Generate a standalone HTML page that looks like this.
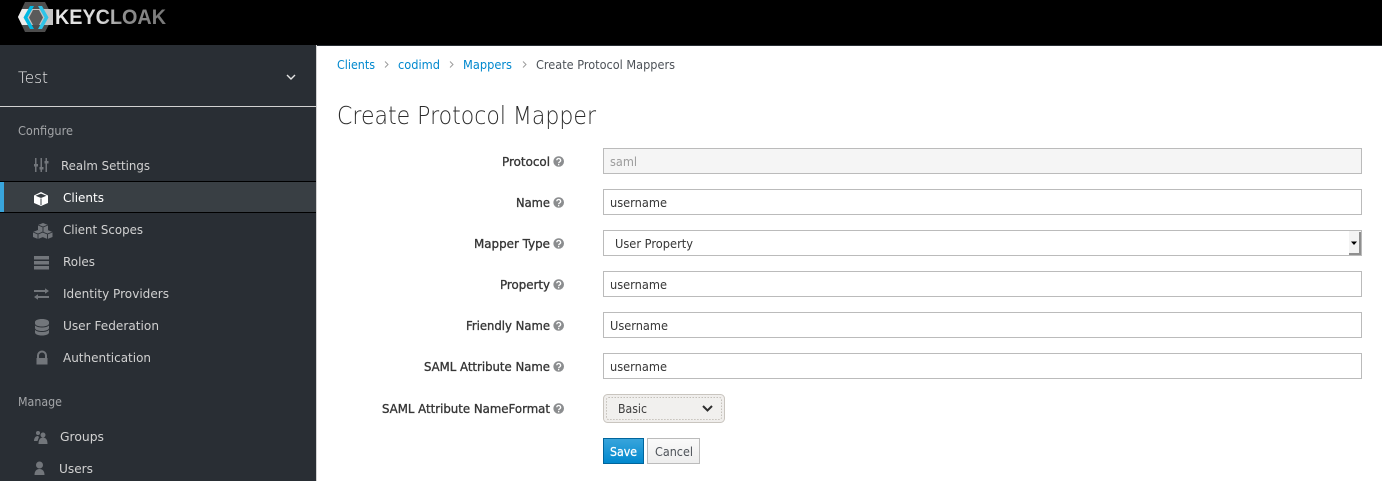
<!DOCTYPE html>
<html><head><meta charset="utf-8"><title>Create Protocol Mapper</title>
<style>
html,body{margin:0;padding:0;background:#fff;width:1382px;height:481px;overflow:hidden}
svg{display:block;position:absolute;left:0;top:0}
text{font-family:"DejaVu Sans","Liberation Sans",sans-serif;font-size:12.5px}
.n{fill:#d1d1d1}
.h{fill:#a3a5a8}
.l{fill:#363636;stroke:#363636;stroke-width:.35px;font-size:12.5px}
.v{fill:#363636}
.a{fill:#0088ce}
.ip{fill:#fff;stroke:#bbb;stroke-width:1}
.ic{fill:#72767b}
</style></head><body>
<svg width="1382" height="481" viewBox="0 0 1382 481" xmlns="http://www.w3.org/2000/svg">
<defs>
<linearGradient id="kc" x1="0" x2="1" y1="0" y2="0"><stop offset="0" stop-color="#e8e8e8"/><stop offset=".42" stop-color="#d8d8d8"/><stop offset=".6" stop-color="#909090"/><stop offset="1" stop-color="#777"/></linearGradient>
<linearGradient id="sv" x1="0" x2="0" y1="0" y2="1"><stop offset="0" stop-color="#39a5dc"/><stop offset="1" stop-color="#0088ce"/></linearGradient>
<linearGradient id="cn" x1="0" x2="0" y1="0" y2="1"><stop offset="0" stop-color="#fafafa"/><stop offset="1" stop-color="#ededed"/></linearGradient>
</defs>
<!-- top bar -->
<rect x="0" y="0" width="1382" height="45" fill="#000"/>
<rect x="317" y="45" width="1065" height="1" fill="#292e34"/>
<!-- logo -->
<path d="M25 2H45L53 17L45 32H25L18 17Z" fill="#4d4d4d"/>
<path d="M22 9H53V25H22L18 17Z" fill="#c4c4c4"/>
<path d="M18 17L22 9H30L26 17L30 25H22Z" fill="#ececec"/>
<path d="M29 17.500L33 10H39L43 17.500L39 25H33Z" fill="#5a5a5a"/>
<path d="M30 6H34L27.500 17.500L34 29H30L23.500 17.500Z" fill="#00b8e3"/>
<path d="M38 6H42L48.500 17.500L42 29H38L44.500 17.500Z" fill="#2fc4e8"/>
<text x="55" y="24" textLength="111" lengthAdjust="spacingAndGlyphs" style="font-family:'Liberation Sans',sans-serif;font-weight:bold;font-size:21px" fill="url(#kc)">KEYCLOAK</text>
<!-- sidebar -->
<rect x="0" y="45" width="316" height="436" fill="#292e34"/>
<rect x="316" y="45" width="1" height="436" fill="#d1d1d1"/>
<rect x="0" y="106" width="316" height="1" fill="#d1d1d1"/>
<text x="18" y="83" textLength="30" lengthAdjust="spacingAndGlyphs" style="font-size:16px;font-weight:200" fill="#f0f0f0">Test</text>
<path d="M287 75L291 79L295 75" fill="none" stroke="#e5e5e5" stroke-width="1.400"/>
<text class="h" x="18" y="135" textLength="55" lengthAdjust="spacingAndGlyphs">Configure</text>
<text class="n" x="61" y="170" textLength="89" lengthAdjust="spacingAndGlyphs">Realm Settings</text>
<rect x="0" y="181" width="316" height="32" fill="#393f44"/>
<rect x="0" y="181" width="316" height="1" fill="#000"/>
<rect x="0" y="212" width="316" height="1" fill="#000"/>
<rect x="0" y="182" width="4" height="30" fill="#39a5dc"/>
<text x="63" y="202" textLength="41" lengthAdjust="spacingAndGlyphs" fill="#fff">Clients</text>
<text class="n" x="63" y="234" textLength="80" lengthAdjust="spacingAndGlyphs">Client Scopes</text>
<text class="n" x="63" y="266" textLength="32" lengthAdjust="spacingAndGlyphs">Roles</text>
<text class="n" x="63" y="298" textLength="106" lengthAdjust="spacingAndGlyphs">Identity Providers</text>
<text class="n" x="63" y="330" textLength="96" lengthAdjust="spacingAndGlyphs">User Federation</text>
<text class="n" x="63" y="362" textLength="88" lengthAdjust="spacingAndGlyphs">Authentication</text>
<text class="h" x="18" y="406" textLength="44" lengthAdjust="spacingAndGlyphs">Manage</text>
<text class="n" x="60" y="441" textLength="44" lengthAdjust="spacingAndGlyphs">Groups</text>
<text class="n" x="59" y="473" textLength="34" lengthAdjust="spacingAndGlyphs">Users</text>
<!-- sidebar icons -->
<g class="ic">
<path d="M35 158h1.500v14H35zM40.500 158h1.500v14h-1.500zM45.500 158h1.500v14h-1.500z"/>
<path d="M34 164h4v2.500h-4zM39.500 167h4v2.500h-4zM44.500 161h4v2.500h-4z"/>
</g>
<path d="M41 192L48 195.500V203L41 206L34 203V195.500Z" fill="#fff"/>
<path d="M35.500 195.800L41 193.600L46.500 195.800L41 198Z" fill="#393f44"/>
<path d="M41 198.500V205" stroke="#393f44" stroke-width="1" fill="none"/>
<g class="ic">
<path d="M43 223l5 2v5l-5 2-5-2v-5z"/>
<path d="M38 230l5 2v5l-5 2-5-2v-5z"/>
<path d="M47.500 230l5 2v5l-5 2-5-2v-5z"/>
<path d="M34 256h15v3.500H34zM34 261h15v3.500H34zM34 266h15v3.500H34z"/>
<path d="M34 290h11v-1.800l4 2.800-4 2.800V292H34zM49 296H38v-1.800l-4 2.800 4 2.800V298h11z"/>
<path d="M35 322c0-1.700 3-3 7-3s7 1.300 7 3v1.500c0 1.700-3 3-7 3s-7-1.300-7-3zM35 325.500c2 1.500 4.500 2 7 2s5-.5 7-2v2.500c0 1.700-3 3-7 3s-7-1.300-7-3zM35 330c2 1.500 4.500 2 7 2s5-.5 7-2v2.500c0 1.700-3 3-7 3s-7-1.300-7-3z"/>
<path d="M37 358v-2.500a5 5 0 0 1 10 0V358h-2v-2.500a3 3 0 0 0-6 0V358z"/>
<path d="M36.500 358h11v6.500h-11z"/>
<circle cx="38" cy="433" r="2"/>
<path d="M34 441c0-3 1.500-5 4-5l1 1-1.500 4z"/>
<circle cx="43" cy="435" r="2.500"/>
<path d="M38.500 444c0-4 1.500-6.500 4.500-6.500s4.500 2.500 4.500 6.500z"/>
<circle cx="39.500" cy="465" r="3.500"/>
<path d="M34.500 475c0-4 2-6 5-6s5 2 5 6z"/>
</g>
<g fill="none" stroke="#292e34" stroke-width=".9">
<path d="M38 225l5 2 5-2M43 227v5M33 232l5 2 5-2M38 234v5M42.500 232l5 2 5-2M47.500 234v5"/>
</g>
<!-- breadcrumb -->
<text class="a" x="337" y="69" textLength="38" lengthAdjust="spacingAndGlyphs">Clients</text>
<path d="M385 61.500l3 3-3 3" fill="none" stroke="#9c9c9c"/>
<text class="a" x="398" y="69" textLength="42" lengthAdjust="spacingAndGlyphs">codimd</text>
<path d="M450 61.500l3 3-3 3" fill="none" stroke="#9c9c9c"/>
<text class="a" x="463" y="69" textLength="49" lengthAdjust="spacingAndGlyphs">Mappers</text>
<path d="M523 61.500l3 3-3 3" fill="none" stroke="#9c9c9c"/>
<text x="536" y="69" textLength="139" lengthAdjust="spacingAndGlyphs" fill="#4d5258">Create Protocol Mappers</text>
<text x="337" y="124" textLength="259" lengthAdjust="spacingAndGlyphs" style="font-family:'DejaVu Sans','Liberation Sans',sans-serif;font-weight:200;font-size:25px" fill="#2b2b2b">Create Protocol Mapper</text>
<!-- labels -->
<text class="l" x="502" y="166" textLength="48" lengthAdjust="spacingAndGlyphs">Protocol</text>
<text class="l" x="516" y="207" textLength="34" lengthAdjust="spacingAndGlyphs">Name</text>
<text class="l" x="474" y="248" textLength="76" lengthAdjust="spacingAndGlyphs">Mapper Type</text>
<text class="l" x="500" y="289" textLength="50" lengthAdjust="spacingAndGlyphs">Property</text>
<text class="l" x="466" y="330" textLength="84" lengthAdjust="spacingAndGlyphs">Friendly Name</text>
<text class="l" x="424" y="371" textLength="126" lengthAdjust="spacingAndGlyphs">SAML Attribute Name</text>
<text class="l" x="382" y="413" textLength="168" lengthAdjust="spacingAndGlyphs">SAML Attribute NameFormat</text>
<!-- help icons -->
<g fill="#8b8d8f">
<circle cx="558.700" cy="161.500" r="5.300"/><circle cx="558.700" cy="202.500" r="5.300"/><circle cx="558.700" cy="243.500" r="5.300"/><circle cx="558.700" cy="284.500" r="5.300"/><circle cx="558.700" cy="325.500" r="5.300"/><circle cx="558.700" cy="366.500" r="5.300"/><circle cx="558.700" cy="408.500" r="5.300"/>
</g>
<g fill="none" stroke="#fff" stroke-width="1.300">
<path d="M556.800 160.300a1.900 1.800 0 1 1 2.800 1.600c-.6.300-.9.600-.9 1.300"/>
<path d="M556.800 201.300a1.900 1.800 0 1 1 2.800 1.600c-.6.300-.9.600-.9 1.300"/>
<path d="M556.800 242.300a1.900 1.800 0 1 1 2.800 1.600c-.6.300-.9.600-.9 1.300"/>
<path d="M556.800 283.300a1.900 1.800 0 1 1 2.800 1.600c-.6.300-.9.600-.9 1.300"/>
<path d="M556.800 324.300a1.900 1.800 0 1 1 2.800 1.600c-.6.300-.9.600-.9 1.300"/>
<path d="M556.800 365.300a1.900 1.800 0 1 1 2.800 1.600c-.6.300-.9.600-.9 1.300"/>
<path d="M556.800 407.300a1.900 1.800 0 1 1 2.800 1.600c-.6.300-.9.600-.9 1.300"/>
</g>
<g fill="#fff"><rect x="558" y="164" width="1.300" height="1.300"/><rect x="558" y="205" width="1.300" height="1.300"/><rect x="558" y="246" width="1.300" height="1.300"/><rect x="558" y="287" width="1.300" height="1.300"/><rect x="558" y="328" width="1.300" height="1.300"/><rect x="558" y="369" width="1.300" height="1.300"/><rect x="558" y="411" width="1.300" height="1.300"/></g>
<!-- inputs -->
<rect x="603.500" y="148.500" width="758" height="25" fill="#f5f5f5" stroke="#bbb"/>
<rect class="ip" x="603.500" y="189.500" width="758" height="25"/>
<rect class="ip" x="603.500" y="230.500" width="758" height="25"/>
<rect class="ip" x="603.500" y="271.500" width="758" height="25"/>
<rect class="ip" x="603.500" y="312.500" width="758" height="25"/>
<rect class="ip" x="603.500" y="353.500" width="758" height="25"/>
<text x="610" y="166" textLength="27" lengthAdjust="spacingAndGlyphs" fill="#9c9c9c">saml</text>
<text class="v" x="610" y="207" textLength="57" lengthAdjust="spacingAndGlyphs">username</text>
<text class="v" x="615" y="248" textLength="78" lengthAdjust="spacingAndGlyphs">User Property</text>
<text class="v" x="610" y="289" textLength="57" lengthAdjust="spacingAndGlyphs">username</text>
<text class="v" x="610" y="330" textLength="58" lengthAdjust="spacingAndGlyphs">Username</text>
<text class="v" x="610" y="371" textLength="57" lengthAdjust="spacingAndGlyphs">username</text>
<!-- select scrollbar -->
<rect x="1349" y="231" width="12" height="24" fill="#f3f3f3"/>
<rect x="1359" y="232" width="2" height="23" fill="#8f8f8f"/>
<rect x="1349" y="253" width="12" height="2" fill="#8f8f8f"/>
<path d="M1351 241.500h6l-3 3.500z" fill="#000"/>
<!-- Basic select -->
<rect x="603.500" y="394.500" width="121" height="28" rx="4" fill="#f0eeec" stroke="#c9c5bf"/>
<rect x="606.500" y="397.500" width="115" height="22" rx="2" fill="#f1f0ee" stroke="#c4c0ba" stroke-dasharray="1.500 1.500"/>
<text x="618" y="413" textLength="29" lengthAdjust="spacingAndGlyphs" fill="#3d3d3d">Basic</text>
<path d="M703 406L707.500 410.500L712 406" fill="none" stroke="#2e2e2e" stroke-width="2"/>
<!-- buttons -->
<rect x="603.500" y="438.500" width="40" height="25" fill="url(#sv)" stroke="#00659c"/>
<text x="610" y="456" textLength="27" lengthAdjust="spacingAndGlyphs" style="font-size:12.5px;stroke:#fff;stroke-width:.25px" fill="#fff">Save</text>
<rect x="647.500" y="438.500" width="52" height="25" fill="url(#cn)" stroke="#bbb"/>
<text x="655" y="456" textLength="38" lengthAdjust="spacingAndGlyphs" fill="#4d5258">Cancel</text>
</svg>
</body></html>
